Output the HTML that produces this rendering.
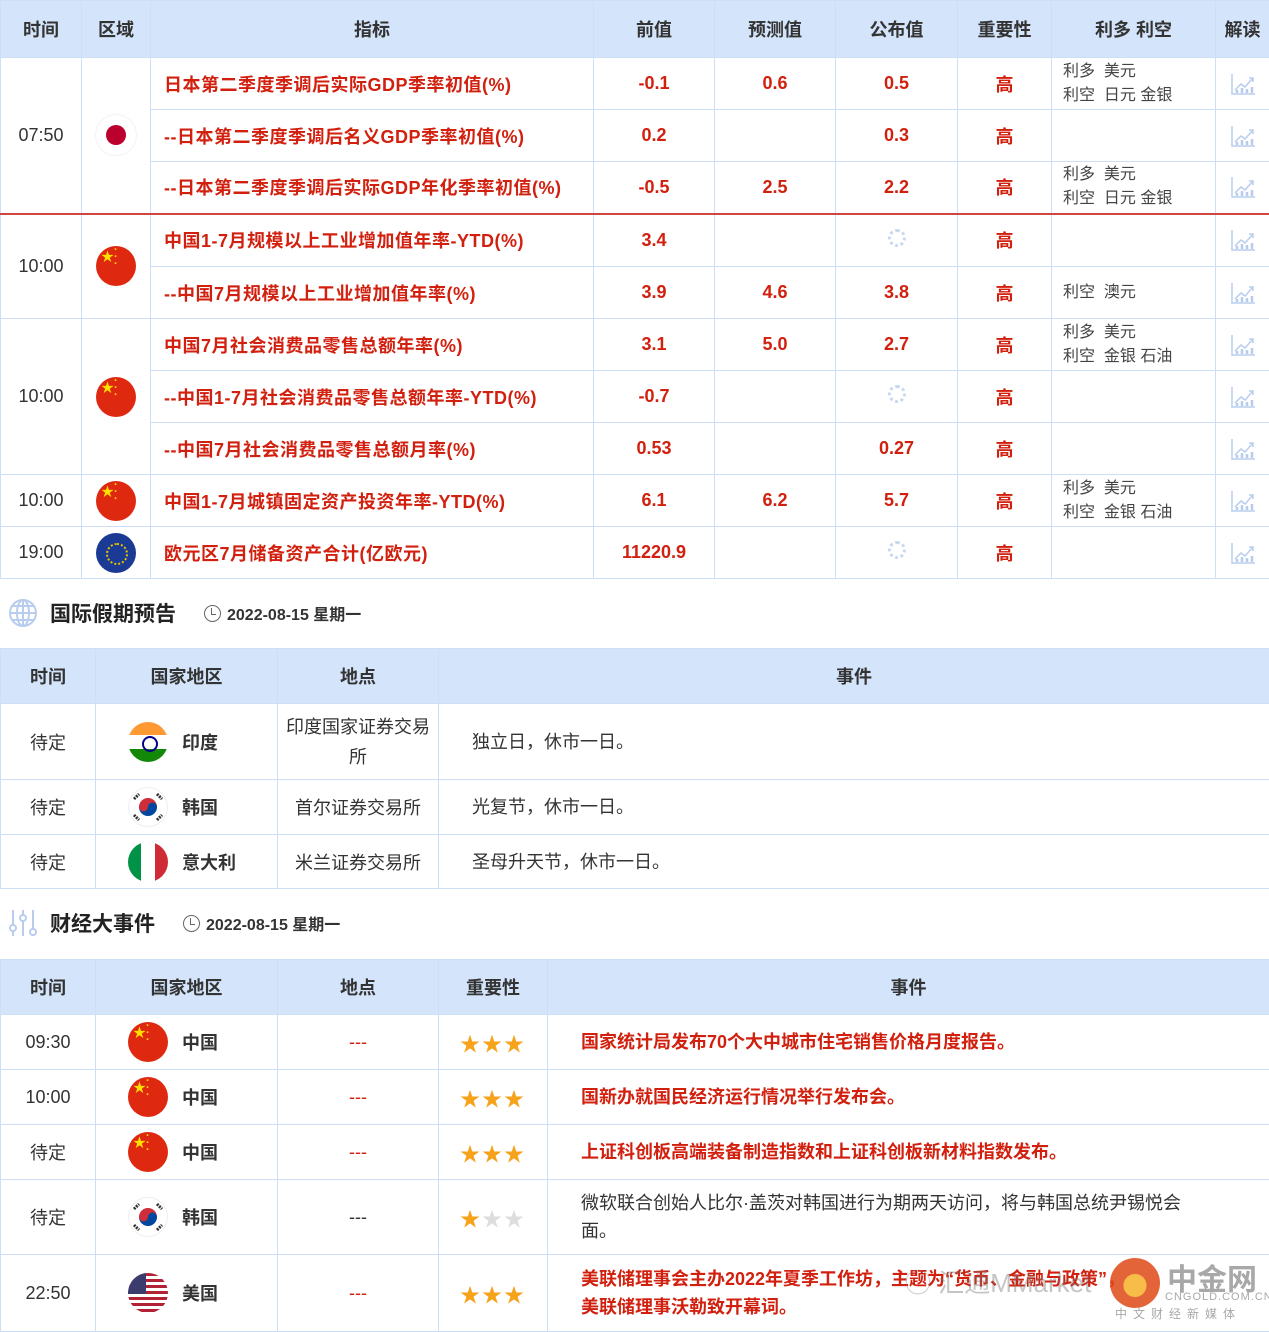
<!DOCTYPE html>
<html><head><meta charset="utf-8">
<style>
*{margin:0;padding:0;box-sizing:border-box}
body{width:1269px;height:1331px;background:#fff;font-family:"Liberation Sans","Noto Sans CJK SC",sans-serif;color:#333;position:relative;overflow:hidden}
table{border-collapse:collapse;table-layout:fixed;position:absolute;left:0}
td,th{border:1px solid #cddff7;text-align:center;vertical-align:middle;font-size:18px}
th{background:#d3e4fb;font-weight:bold;color:#333;font-size:18px}
.r{color:#d2200f;font-weight:bold}
.ind{text-align:left;padding-left:13px;letter-spacing:0.5px}
.lk{text-align:left;padding-left:11px;font-size:16px;line-height:24px;color:#444}
.f{display:inline-block;width:40px;height:40px;border-radius:50%;vertical-align:middle;position:relative;overflow:hidden}
.cn{background:#de2910}
.cn:before{content:"★";position:absolute;left:5px;top:4px;color:#ffde00;font-size:13px;line-height:13px}
.cn:after{content:"·\A·\A·";white-space:pre;position:absolute;left:18px;top:1px;color:#ffde00;font-size:11px;line-height:7px;font-weight:bold}
.jp{background:#fff;box-shadow:0 0 2px #ddd}
.jp:after{content:"";position:absolute;left:10px;top:10px;width:20px;height:20px;border-radius:50%;background:#bc002d}
.eu{background:#1a3a94}
.eu:after{content:"";position:absolute;left:10px;top:10px;width:18px;height:18px;border-radius:50%;border:2px dotted #e8c400}
.in{background:linear-gradient(#ff9933 0 33%,#fff 33% 67%,#138808 67%)}
.in:after{content:"";position:absolute;left:14px;top:14px;width:12px;height:12px;border-radius:50%;border:2px solid #000088}
.it{background:linear-gradient(90deg,#009246 0 33%,#fff 33% 67%,#ce2b37 67%)}
.us{background:repeating-linear-gradient(#b22234 0 3px,#fff 3px 6px)}
.us:after{content:"";position:absolute;left:0;top:0;width:18px;height:21px;background:#3c3b6e}
.ic{display:inline-block;vertical-align:middle}
.sec{position:absolute;left:8px;font-size:21px;font-weight:bold;color:#222;display:flex;align-items:center}
.sec .d{font-size:16px;font-weight:bold;color:#333;margin-left:28px;display:flex;align-items:center}
.clk{width:17px;height:17px;border:1.5px solid #666;border-radius:50%;position:relative;margin-right:6px}
.clk:after{content:"";position:absolute;left:6px;top:2px;width:4px;height:6px;border-left:1.5px solid #666;border-bottom:1.5px solid #666}
.cc{display:flex;align-items:center;justify-content:flex-start;padding-left:32px;gap:14px;font-weight:bold}
.st{color:#f7a21b;font-size:20px;letter-spacing:2px}
.sg{color:#ddd}
.ev{text-align:left;padding-left:33px;line-height:28px}
.spin{display:inline-block;width:18px;height:18px;border-radius:50%;border:3px dotted #c8d8ef}
</style></head><body>
<table style="top:0;width:1269px">
<colgroup><col style="width:81px"><col style="width:69px"><col style="width:443px"><col style="width:121px"><col style="width:121px"><col style="width:122px"><col style="width:94px"><col style="width:164px"><col style="width:54px"></colgroup>
<tr style="height:57px"><th>时间</th><th>区域</th><th>指标</th><th>前值</th><th>预测值</th><th>公布值</th><th>重要性</th><th>利多 利空</th><th>解读</th></tr>
<tr style="height:52px"><td rowspan="3">07:50</td><td rowspan="3"><span class="f jp"></span></td><td class="ind r">日本第二季度季调后实际GDP季率初值(%)</td><td class="r">-0.1</td><td class="r">0.6</td><td class="r">0.5</td><td class="r">高</td><td class="lk">利多 &nbsp;美元<br>利空 &nbsp;日元 金银</td><td><svg class="ic" width="26" height="24" viewBox="0 0 26 24" fill="none" stroke="#b8cdee" stroke-width="1.5"><path d="M2 2V22H25M5 18l6-6 4 3 8-9M19 6h4v4"/><path d="M7 21v-3M12 21v-5M17 21v-4M22 21v-6" stroke-width="2.5"/></svg></td></tr>
<tr style="height:52px"><td class="ind r">--日本第二季度季调后名义GDP季率初值(%)</td><td class="r">0.2</td><td></td><td class="r">0.3</td><td class="r">高</td><td></td><td><svg class="ic" width="26" height="24" viewBox="0 0 26 24" fill="none" stroke="#b8cdee" stroke-width="1.5"><path d="M2 2V22H25M5 18l6-6 4 3 8-9M19 6h4v4"/><path d="M7 21v-3M12 21v-5M17 21v-4M22 21v-6" stroke-width="2.5"/></svg></td></tr>
<tr style="height:52px;border-bottom:2px solid #d0463c"><td class="ind r">--日本第二季度季调后实际GDP年化季率初值(%)</td><td class="r">-0.5</td><td class="r">2.5</td><td class="r">2.2</td><td class="r">高</td><td class="lk">利多 &nbsp;美元<br>利空 &nbsp;日元 金银</td><td><svg class="ic" width="26" height="24" viewBox="0 0 26 24" fill="none" stroke="#b8cdee" stroke-width="1.5"><path d="M2 2V22H25M5 18l6-6 4 3 8-9M19 6h4v4"/><path d="M7 21v-3M12 21v-5M17 21v-4M22 21v-6" stroke-width="2.5"/></svg></td></tr>
<tr style="height:53px;border-top:2px solid #d0463c"><td rowspan="2">10:00</td><td rowspan="2"><span class="f cn"></span></td><td class="ind r">中国1-7月规模以上工业增加值年率-YTD(%)</td><td class="r">3.4</td><td></td><td><span class="spin"></span></td><td class="r">高</td><td></td><td><svg class="ic" width="26" height="24" viewBox="0 0 26 24" fill="none" stroke="#b8cdee" stroke-width="1.5"><path d="M2 2V22H25M5 18l6-6 4 3 8-9M19 6h4v4"/><path d="M7 21v-3M12 21v-5M17 21v-4M22 21v-6" stroke-width="2.5"/></svg></td></tr>
<tr style="height:52px"><td class="ind r">--中国7月规模以上工业增加值年率(%)</td><td class="r">3.9</td><td class="r">4.6</td><td class="r">3.8</td><td class="r">高</td><td class="lk">利空 &nbsp;澳元</td><td><svg class="ic" width="26" height="24" viewBox="0 0 26 24" fill="none" stroke="#b8cdee" stroke-width="1.5"><path d="M2 2V22H25M5 18l6-6 4 3 8-9M19 6h4v4"/><path d="M7 21v-3M12 21v-5M17 21v-4M22 21v-6" stroke-width="2.5"/></svg></td></tr>
<tr style="height:52px"><td rowspan="3">10:00</td><td rowspan="3"><span class="f cn"></span></td><td class="ind r">中国7月社会消费品零售总额年率(%)</td><td class="r">3.1</td><td class="r">5.0</td><td class="r">2.7</td><td class="r">高</td><td class="lk">利多 &nbsp;美元<br>利空 &nbsp;金银 石油</td><td><svg class="ic" width="26" height="24" viewBox="0 0 26 24" fill="none" stroke="#b8cdee" stroke-width="1.5"><path d="M2 2V22H25M5 18l6-6 4 3 8-9M19 6h4v4"/><path d="M7 21v-3M12 21v-5M17 21v-4M22 21v-6" stroke-width="2.5"/></svg></td></tr>
<tr style="height:52px"><td class="ind r">--中国1-7月社会消费品零售总额年率-YTD(%)</td><td class="r">-0.7</td><td></td><td><span class="spin"></span></td><td class="r">高</td><td></td><td><svg class="ic" width="26" height="24" viewBox="0 0 26 24" fill="none" stroke="#b8cdee" stroke-width="1.5"><path d="M2 2V22H25M5 18l6-6 4 3 8-9M19 6h4v4"/><path d="M7 21v-3M12 21v-5M17 21v-4M22 21v-6" stroke-width="2.5"/></svg></td></tr>
<tr style="height:52px"><td class="ind r">--中国7月社会消费品零售总额月率(%)</td><td class="r">0.53</td><td></td><td class="r">0.27</td><td class="r">高</td><td></td><td><svg class="ic" width="26" height="24" viewBox="0 0 26 24" fill="none" stroke="#b8cdee" stroke-width="1.5"><path d="M2 2V22H25M5 18l6-6 4 3 8-9M19 6h4v4"/><path d="M7 21v-3M12 21v-5M17 21v-4M22 21v-6" stroke-width="2.5"/></svg></td></tr>
<tr style="height:52px"><td>10:00</td><td><span class="f cn"></span></td><td class="ind r">中国1-7月城镇固定资产投资年率-YTD(%)</td><td class="r">6.1</td><td class="r">6.2</td><td class="r">5.7</td><td class="r">高</td><td class="lk">利多 &nbsp;美元<br>利空 &nbsp;金银 石油</td><td><svg class="ic" width="26" height="24" viewBox="0 0 26 24" fill="none" stroke="#b8cdee" stroke-width="1.5"><path d="M2 2V22H25M5 18l6-6 4 3 8-9M19 6h4v4"/><path d="M7 21v-3M12 21v-5M17 21v-4M22 21v-6" stroke-width="2.5"/></svg></td></tr>
<tr style="height:52px"><td>19:00</td><td><span class="f eu"></span></td><td class="ind r">欧元区7月储备资产合计(亿欧元)</td><td class="r">11220.9</td><td></td><td><span class="spin"></span></td><td class="r">高</td><td></td><td><svg class="ic" width="26" height="24" viewBox="0 0 26 24" fill="none" stroke="#b8cdee" stroke-width="1.5"><path d="M2 2V22H25M5 18l6-6 4 3 8-9M19 6h4v4"/><path d="M7 21v-3M12 21v-5M17 21v-4M22 21v-6" stroke-width="2.5"/></svg></td></tr>
</table>

<div class="sec" style="top:598px"><svg width="30" height="30" viewBox="0 0 30 30" fill="none" stroke="#b8cdee" stroke-width="2"><circle cx="15" cy="15" r="13"/><ellipse cx="15" cy="15" rx="6" ry="13"/><path d="M2 15h26M4 8h22M4 22h22M15 2v26"/></svg><span style="margin-left:12px">国际假期预告</span><span class="d"><span class="clk"></span>2022-08-15 星期一</span></div>

<table style="top:648px;width:1269px">
<colgroup><col style="width:95px"><col style="width:182px"><col style="width:161px"><col style="width:831px"></colgroup>
<tr style="height:55px"><th>时间</th><th>国家地区</th><th>地点</th><th>事件</th></tr>
<tr style="height:76px"><td>待定</td><td><div class="cc"><span class="f in"></span>印度</div></td><td style="line-height:30px;padding:0 4px">印度国家证券交易所</td><td class="ev">独立日，休市一日。</td></tr>
<tr style="height:55px"><td>待定</td><td><div class="cc"><svg width="40" height="40" viewBox="0 0 40 40"><circle cx="20" cy="20" r="19.5" fill="#fff" stroke="#eee"/><path d="M11 20a9 9 0 0 1 18 0z" fill="#cd2e3a"/><path d="M11 20a9 9 0 0 0 18 0z" fill="#0047a0"/><circle cx="15.5" cy="20" r="4.5" fill="#cd2e3a"/><circle cx="24.5" cy="20" r="4.5" fill="#0047a0"/><g stroke="#333" stroke-width="3" stroke-dasharray="2 1"><path d="M6 12l5-5M29 7l5 5M6 28l5 5M29 33l5-5"/></g></svg>韩国</div></td><td>首尔证券交易所</td><td class="ev">光复节，休市一日。</td></tr>
<tr style="height:54px"><td>待定</td><td><div class="cc"><span class="f it"></span>意大利</div></td><td>米兰证券交易所</td><td class="ev">圣母升天节，休市一日。</td></tr>
</table>

<div class="sec" style="top:908px"><svg width="30" height="30" viewBox="0 0 30 30" fill="none" stroke="#b8cdee" stroke-width="2"><path d="M5 2v26M15 2v26M25 2v26"/><circle cx="5" cy="20" r="3" fill="#fff"/><circle cx="15" cy="10" r="3" fill="#fff"/><circle cx="25" cy="24" r="3" fill="#fff"/></svg><span style="margin-left:12px">财经大事件</span><span class="d"><span class="clk"></span>2022-08-15 星期一</span></div>

<table style="top:959px;width:1269px">
<colgroup><col style="width:95px"><col style="width:182px"><col style="width:161px"><col style="width:109px"><col style="width:722px"></colgroup>
<tr style="height:55px"><th>时间</th><th>国家地区</th><th>地点</th><th>重要性</th><th>事件</th></tr>
<tr style="height:55px"><td>09:30</td><td><div class="cc"><span class="f cn"></span>中国</div></td><td class="r" style="font-weight:normal">---</td><td class="st">★★★</td><td class="ev r">国家统计局发布70个大中城市住宅销售价格月度报告。</td></tr>
<tr style="height:55px"><td>10:00</td><td><div class="cc"><span class="f cn"></span>中国</div></td><td class="r" style="font-weight:normal">---</td><td class="st">★★★</td><td class="ev r">国新办就国民经济运行情况举行发布会。</td></tr>
<tr style="height:55px"><td>待定</td><td><div class="cc"><span class="f cn"></span>中国</div></td><td class="r" style="font-weight:normal">---</td><td class="st">★★★</td><td class="ev r">上证科创板高端装备制造指数和上证科创板新材料指数发布。</td></tr>
<tr style="height:75px"><td>待定</td><td><div class="cc"><svg width="40" height="40" viewBox="0 0 40 40"><circle cx="20" cy="20" r="19.5" fill="#fff" stroke="#eee"/><path d="M11 20a9 9 0 0 1 18 0z" fill="#cd2e3a"/><path d="M11 20a9 9 0 0 0 18 0z" fill="#0047a0"/><circle cx="15.5" cy="20" r="4.5" fill="#cd2e3a"/><circle cx="24.5" cy="20" r="4.5" fill="#0047a0"/><g stroke="#333" stroke-width="3" stroke-dasharray="2 1"><path d="M6 12l5-5M29 7l5 5M6 28l5 5M29 33l5-5"/></g></svg>韩国</div></td><td>---</td><td class="st">★<span class="sg">★★</span></td><td class="ev" style="padding-right:75px">微软联合创始人比尔·盖茨对韩国进行为期两天访问，将与韩国总统尹锡悦会面。</td></tr>
<tr style="height:77px"><td>22:50</td><td><div class="cc"><span class="f us"></span>美国</div></td><td class="r" style="font-weight:normal">---</td><td class="st">★★★</td><td class="ev r">美联储理事会主办2022年夏季工作坊，主题为“货币、金融与政策”，<br>美联储理事沃勒致开幕词。</td></tr>
</table>

<div style="position:absolute;left:905px;top:1255px;width:360px;height:70px;opacity:.85">
<div style="position:absolute;left:0;top:8px;font-size:26px;color:rgba(120,120,120,.5)">◯ 汇通MMarket</div>
<div style="position:absolute;left:205px;top:3px;width:50px;height:50px;border-radius:50%;background:radial-gradient(circle at 50% 55%,#f7b12a 0 30%,#e04a17 32%)"></div>
<div style="position:absolute;left:262px;top:0;font-size:30px;font-weight:bold;color:#999">中金网</div>
<div style="position:absolute;left:260px;top:36px;font-size:11px;color:#999;letter-spacing:1px">CNGOLD.COM.CN</div>
<div style="position:absolute;left:210px;top:50px;font-size:12px;color:#999;letter-spacing:6px">中文财经新媒体</div>
</div>
</body></html>
